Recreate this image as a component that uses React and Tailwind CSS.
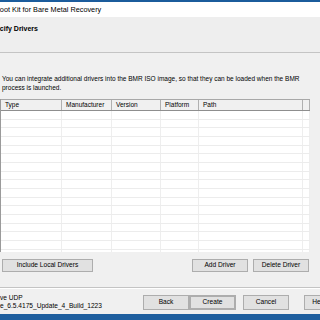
import React from "react";

const btn =
  "flex items-center justify-center bg-[#e1e1e1] border border-[#adadad] text-[6.6px] leading-none text-black";

export default function App() {
  const cols = [
    { label: "Type", w: "w-[61px]" },
    { label: "Manufacturer", w: "w-[50px]" },
    { label: "Version", w: "w-[49px]" },
    { label: "Platform", w: "w-[38px]" },
    { label: "Path", w: "w-[104px]" },
    { label: "", w: "w-[7px]" },
  ];
  const rows = Array.from({ length: 17 });
  return (
    <div className="w-[320px] h-[320px] overflow-hidden bg-[#f0f0f0] flex flex-col font-['Liberation_Sans',Arial,sans-serif] text-black">
      <div className="h-[2px] bg-[#1b5c9c] shrink-0" />
      <div className="h-[15px] bg-white shrink-0 flex items-center overflow-hidden">
        <span className="-ml-[5px] text-[7.3px] leading-none whitespace-nowrap">
          Boot Kit for Bare Metal Recovery
        </span>
      </div>
      <div className="h-[36px] bg-[#eeeeee] shrink-0 overflow-hidden pt-[8px] border-b border-[#c4c4c4]">
        <span className="block -ml-[13px] text-[7px] leading-[7px] font-bold whitespace-nowrap">
          Specify Drivers
        </span>
      </div>
      <div className="h-[235px] shrink-0 flex flex-col border-b border-[#c4c4c4]">
        <div className="pt-[21px] pl-[2px] text-[6.5px] leading-[9px] whitespace-nowrap">
          <div>You can integrate additional drivers into the BMR ISO image, so that they can be loaded when the BMR</div>
          <div>process is launched.</div>
        </div>
        <div className="mt-[7px] w-[310px] h-[153px] border-l border-[#9a9a9a] bg-white flex flex-col overflow-hidden">
          <div className="flex h-[12px] shrink-0 bg-[#f0f0f0] border-t border-[#a8a8a8] border-b border-b-[#8e8e8e]">
            {cols.map((c, i) => (
              <div
                key={i}
                className={`${c.w} shrink-0 h-full border-r border-[#b0b0b0] pl-[4px] flex items-center text-[6.5px] leading-none whitespace-nowrap`}
              >
                {c.label}
              </div>
            ))}
          </div>
          {rows.map((_, r) => (
            <div key={r} className="flex h-[8.67px] shrink-0 border-b border-[#ececec]">
              {cols.map((c, i) => (
                <div key={i} className={`${c.w} shrink-0 h-full border-r border-[#eeeeee]`} />
              ))}
            </div>
          ))}
        </div>
        <div className="mt-[7px] flex h-[13px] w-[309px]">
          <div className={`${btn} ml-[2px] w-[91px] h-full`}>Include Local Drivers</div>
          <div className="flex-1" />
          <div className={`${btn} w-[56px] h-full`}>Add Driver</div>
          <div className={`${btn} ml-[5px] w-[56px] h-full`}>Delete Driver</div>
        </div>
      </div>
      <div className="h-[26px] shrink-0 flex border-t border-white">
        <div className="w-[143px] shrink-0 pt-[5px] text-[6.6px] leading-[8px] whitespace-nowrap overflow-hidden">
          <div>ve UDP</div>
          <div>e_6.5.4175_Update_4_Build_1223</div>
        </div>
        <div className="flex pt-[6px] h-[21px]">
          <div className={`${btn} w-[46px] h-full`}>Back</div>
          <div className={`${btn} w-[47px] h-full border-[#6e6e6e] border-2`}>Create</div>
          <div className={`${btn} ml-[7px] w-[46px] h-full`}>Cancel</div>
          <div className={`${btn} ml-[15px] w-[30px] h-full shrink-0`}>Help</div>
        </div>
      </div>
      <div className="flex-1 bg-[#1f5f9f]" />
    </div>
  );
}
